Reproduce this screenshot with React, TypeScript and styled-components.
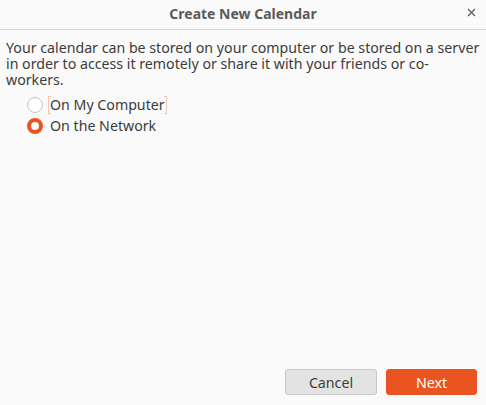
import React from "react";
import styled, { createGlobalStyle } from "styled-components";

const Global = createGlobalStyle`
  html, body { margin: 0; padding: 0; background: #fafafa; }
  body { font-family: "Noto Sans", "DejaVu Sans", sans-serif; }
  * { box-sizing: border-box; }
`;

const Window = styled.div`
  display: flex;
  flex-direction: column;
  height: 405px;
  width: 486px;
  background: #fafafa;
`;

const TitleBar = styled.div`
  position: relative;
  height: 30px;
  display: flex;
  align-items: center;
  justify-content: center;
  border-bottom: 1px solid #d6d6d6;
  flex-shrink: 0;
`;

const Title = styled.div`
  font-size: 14px;
  font-weight: 700;
  color: #5a5a5a;
  padding-bottom: 2px;
`;

const CloseButton = styled.div`
  position: absolute;
  right: 8px;
  top: 5px;
  width: 14px;
  height: 14px;
  display: flex;
  align-items: center;
  justify-content: center;
`;

const Content = styled.div`
  flex: 1;
  padding: 10px 6px 0 6px;
`;

const Description = styled.p`
  margin: 0;
  font-size: 14.2px;
  line-height: 16px;
  color: #3c3c3c;
`;

const RadioList = styled.div`
  display: flex;
  flex-direction: column;
  padding-left: 21px;
  margin-top: 6px;
`;

const RadioRow = styled.label`
  display: flex;
  align-items: center;
  height: 21.5px;
  gap: 6px;
  font-size: 14.2px;
  color: #3c3c3c;
`;

const RadioCircle = styled.span<{ $checked?: boolean }>`
  width: 16px;
  height: 16px;
  border-radius: 50%;
  flex-shrink: 0;
  background: ${(p) => (p.$checked ? "#fafafa" : "#ffffff")};
  border: ${(p) => (p.$checked ? "4.5px solid #e95420" : "1px solid #c4c4c4")};
`;

const RadioLabel = styled.span<{ $focused?: boolean }>`
  position: relative;
  padding: 0 1px;
  line-height: 16px;
  &::before, &::after {
    content: "";
    display: ${(p) => (p.$focused ? "block" : "none")};
    position: absolute;
    top: -1px;
    bottom: -1px;
    width: 2px;
    border: 1px solid #f5c4b2;
  }
  &::before { left: -1px; border-right: none; }
  &::after { right: -1px; border-left: none; }
`;

const Footer = styled.div`
  display: flex;
  justify-content: flex-end;
  gap: 9px;
  padding: 0 9px 10px 0;
`;

const Button = styled.button<{ $primary?: boolean }>`
  width: ${(p) => (p.$primary ? "91px" : "92px")};
  height: 26px;
  border-radius: 3px;
  font-family: inherit;
  font-size: 14.2px;
  cursor: default;
  border: 1px solid ${(p) => (p.$primary ? "#e65325" : "#c8c8c8")};
  background: ${(p) => (p.$primary ? "#e95420" : "#e3e3e3")};
  color: ${(p) => (p.$primary ? "#ffffff" : "#3c3c3c")};
`;

export default function App() {
  return (
    <>
      <Global />
      <Window>
        <TitleBar>
          <Title>Create New Calendar</Title>
          <CloseButton>
            <svg width="9" height="9" viewBox="0 0 9 9">
              <path d="M1 1 L8 8 M8 1 L1 8" stroke="#5a5a5a" strokeWidth="1.2" />
            </svg>
          </CloseButton>
        </TitleBar>
        <Content>
          <Description>
            Your calendar can be stored on your computer or be stored on a server in order to access it
            remotely or share it with your friends or co-workers.
          </Description>
          <RadioList>
            <RadioRow>
              <RadioCircle />
              <RadioLabel $focused>On My Computer</RadioLabel>
            </RadioRow>
            <RadioRow>
              <RadioCircle $checked />
              <RadioLabel>On the Network</RadioLabel>
            </RadioRow>
          </RadioList>
        </Content>
        <Footer>
          <Button>Cancel</Button>
          <Button $primary>Next</Button>
        </Footer>
      </Window>
    </>
  );
}
